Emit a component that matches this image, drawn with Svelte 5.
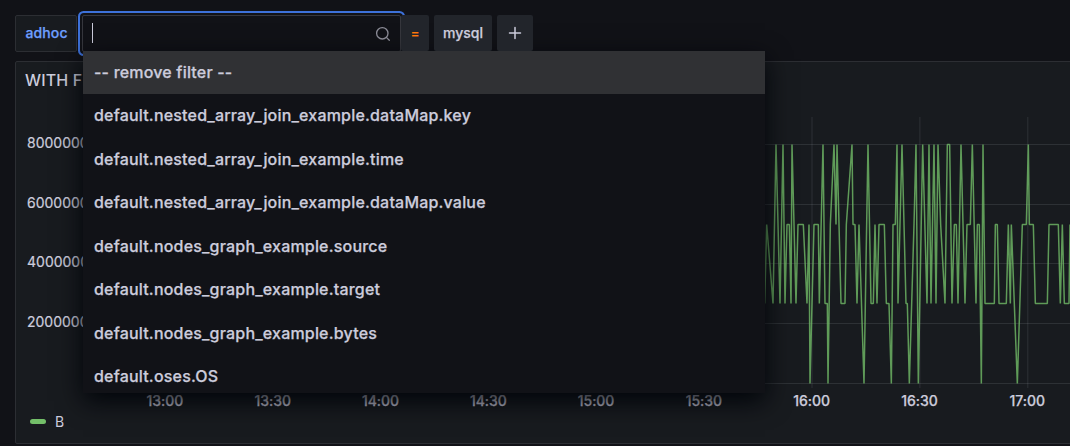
<script>
  const options = [
    '-- remove filter --',
    'default.nested_array_join_example.dataMap.key',
    'default.nested_array_join_example.time',
    'default.nested_array_join_example.dataMap.value',
    'default.nodes_graph_example.source',
    'default.nodes_graph_example.target',
    'default.nodes_graph_example.bytes',
    'default.oses.OS'
  ];
  const yLabels = ['8000000', '6000000', '4000000', '2000000'];
  const xLabels = ['13:00', '13:30', '14:00', '14:30', '15:00', '15:30', '16:00', '16:30', '17:00'];
  const gridX = xLabels.map((_, i) => 81.6 + i * 107.9);
  const gridY = [27.5, 87.5, 146.5, 206.5, 266.5];

  // Four sample levels of the series; x is in thirds of a pixel.
  const level = { T: 27.5, M: 107.5, L: 186.5, B: 266.5 };
  const series =
    '2L 8M 27L 36T 48L 57T 63L 69M 76M 81L 84T 96L 102M 118M 129L 135M 138B 150M 163M 166L 177T 183L 190L 192B ' +
    '199M 210T 216M 219T 231L 243L 247M 264T 267M 273M 279L 285M 300B 312T 321L 328L 333M 339L 345M 361M 367L 375L ' +
    '382B 387M 394M 399T 402L 414T 426L 430L 436B 450M 456T 463B 476T 489L 495T 501L 510T 516L 522T 530M 543L 550T ' +
    '557T 564L 571M 577M 582L 591T 603L 609M 619M 625T 636L 640M 646M 652B 657T 663L 691L 694M 700M 705L 727L 733M ' +
    '739L 742M 760B 775M 787M 793T 796M 808M 814L 850L 855M 883M 889L 895M 901L 915L 918M';
  const points = series
    .split(' ')
    .map((s) => `${(681 + parseInt(s) / 3).toFixed(2)},${level[s.at(-1)]}`)
    .join(' ');
</script>

<main>
  <div class="filters">
    <div class="label">adhoc</div>
    <div class="picker">
      <div class="input">
        <span class="caret"></span>
        <svg width="16" height="16" viewBox="0 0 16 16" fill="none" stroke="#8e8e99" stroke-width="1.3" stroke-linecap="round">
          <circle cx="7.3" cy="7.3" r="5.7" />
          <path d="M11.4 11.4 14.3 14.3" />
        </svg>
      </div>
      <div class="menu">
        {#each options as option, i}
          <div class="option" class:active={i === 0}>{option}</div>
        {/each}
      </div>
    </div>
    <div class="button operator">=</div>
    <div class="button value">mysql</div>
    <div class="button add">
      <svg width="14" height="14" viewBox="0 0 14 14" stroke="#ccccdc" stroke-width="1.5" stroke-linecap="round">
        <path d="M7 1.5v11M1.5 7h11" />
      </svg>
    </div>
  </div>

  <section class="panel">
    <h2>WITH F</h2>
    <div class="plot">
      <div class="y-axis">
        {#each yLabels as label}<span>{label}</span>{/each}
      </div>
      <svg class="chart" width="987" height="272" viewBox="0 0 987 272">
        {#each gridX as x}
          <line x1={x} x2={x} y1="0" y2="271" />
        {/each}
        {#each gridY as y}
          <line x1="0" x2="987" y1={y} y2={y} />
        {/each}
        <polyline {points} />
      </svg>
    </div>
    <div class="x-axis">
      {#each xLabels as label}<span>{label}</span>{/each}
    </div>
    <div class="legend"><i></i>B</div>
  </section>
</main>

<style>
  :global(body) {
    background: #111217;
    overflow: hidden;
  }
  main {
    box-sizing: border-box;
    width: 1070px;
    height: 446px;
    padding: 15px 0 0 15px;
    overflow: hidden;
    background: #111217;
    color: #ccccdc;
    font-family: Inter, 'Liberation Sans', sans-serif;
    font-size: 14px;
  }
  .filters {
    display: flex;
    height: 37px;
    font-weight: 500;
    -webkit-text-stroke: 0.25px currentColor;
  }
  .label {
    box-sizing: border-box;
    width: 62px;
    padding-left: 9.5px;
    border: 1px solid #2c2e33;
    border-radius: 2px;
    background: #181b1f;
    color: #6e9fff;
    line-height: 34px;
    letter-spacing: 0.1px;
  }
  .picker {
    position: relative;
    z-index: 2;
    width: 319px;
    margin-left: 5px;
  }
  .input {
    box-sizing: border-box;
    display: flex;
    align-items: center;
    justify-content: space-between;
    height: 37px;
    padding: 0 9px 0 9px;
    border: 1px solid #36373d;
    border-radius: 2px;
    background: #111217;
    box-shadow: 0 0 0 2px #111217, 0 0 0 4px #3d71d9;
  }
  .caret {
    width: 1px;
    height: 20px;
    margin-top: -2px;
    background: #ccccdc;
  }
  .menu {
    position: absolute;
    top: 36px;
    left: 1px;
    width: 682px;
    height: 342px;
    overflow: hidden;
    background: #111217;
    box-shadow: 0 8px 24px rgb(1, 4, 9);
  }
  .option {
    box-sizing: border-box;
    height: 43.45px;
    padding-left: 11px;
    line-height: 43px;
    font-size: 16px;
    letter-spacing: 0.19px;
    white-space: nowrap;
  }
  .active {
    background: #303134;
  }
  .button {
    position: relative;
    z-index: 3;
    display: flex;
    align-items: center;
    justify-content: center;
    height: 36px;
    border-radius: 2px;
    background: #22252b;
  }
  .operator {
    width: 28px;
    color: #ff780a;
    font-size: 13px;
  }
  .value {
    width: 58px;
    height: 35px;
    padding-bottom: 1px;
    margin-left: 5px;
  }
  .add {
    width: 36px;
    margin-left: 5px;
  }
  .panel {
    box-sizing: border-box;
    width: 1070px;
    height: 383px;
    margin-top: 9px;
    border: 1px solid #2c2e33;
    border-radius: 2px;
    background: #181b1f;
  }
  h2 {
    height: 37px;
    margin: 0 0 18px;
    padding-left: 9px;
    font-size: 16px;
    font-weight: 500;
    line-height: 37px;
    letter-spacing: 0.15px;
  }
  .plot {
    display: flex;
    height: 272px;
  }
  .y-axis {
    display: flex;
    flex-direction: column;
    width: 67px;
    margin-top: -4px;
    -webkit-text-stroke: 0.2px currentColor;
  }
  .y-axis span {
    box-sizing: border-box;
    height: 59.7px;
    padding-left: 11px;
    line-height: 60px;
  }
  .chart line {
    stroke: rgba(240, 250, 255, 0.1);
    stroke-width: 1;
  }
  .chart polyline {
    fill: none;
    stroke: #73bf69;
    stroke-width: 1.5;
    stroke-opacity: 0.78;
    stroke-linejoin: bevel;
  }
  .x-axis {
    display: flex;
    margin-left: 95px;
    height: 22px;
    line-height: 23px;
    font-weight: 500;
    -webkit-text-stroke: 0.25px currentColor;
    letter-spacing: -0.05px;
  }
  .x-axis span {
    flex: 0 0 107.8px;
    text-align: center;
  }
  .legend {
    display: flex;
    align-items: center;
    gap: 9px;
    height: 21px;
    padding-left: 14px;
  }
  .legend i {
    width: 16px;
    height: 5px;
    border-radius: 3px;
    background: #73bf69;
  }
</style>
